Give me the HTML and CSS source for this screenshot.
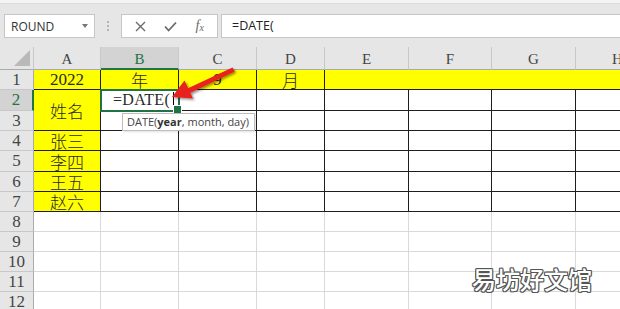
FILE: index.html
```html
<!DOCTYPE html>
<html lang="zh">
<head>
    <meta charset="UTF-8">
    <title>DATE 函数</title>
    <link rel="stylesheet" href="styles.css">
</head>
<body>
    <div class="ribbon-edge"></div>

    <div class="formula-bar">
        <div class="name-box"><span>ROUND</span><span class="drop"></span></div>
        <div class="grip"><i></i><i></i><i></i></div>
        <div class="fx-box">
            <svg width="11" height="11" viewBox="0 0 11 11"><path d="M1 1 L10 10 M10 1 L1 10" stroke="#6a6a6a" stroke-width="1.4" fill="none"/></svg>
            <svg width="13" height="11" viewBox="0 0 13 11"><path d="M1 5.5 L4.6 9.5 L12 1.5" stroke="#6a6a6a" stroke-width="1.8" fill="none"/></svg>
            <span class="fx"><i>f</i><sub>x</sub></span>
        </div>
        <div class="formula">=DATE(</div>
    </div>

    <div class="sheet">
        <!-- column headers -->
        <div class="corner"><span class="tri"></span></div>
        <div class="hd">A</div>
        <div class="hd on">B</div>
        <div class="hd">C</div>
        <div class="hd">D</div>
        <div class="hd">E</div>
        <div class="hd">F</div>
        <div class="hd">G</div>
        <div class="hd">H</div>

        <!-- row 1 -->
        <div class="rh">1</div>
        <div class="cell box fill">2022</div>
        <div class="cell box fill">年</div>
        <div class="cell box fill">9</div>
        <div class="cell box fill">月</div>
        <div class="cell box fill wide"></div>

        <!-- row 2 -->
        <div class="rh on">2</div>
        <div class="cell box fill tall">姓名</div>
        <div class="cell box editing">=DATE(<span class="cursor"></span></div>
        <div class="cell box"></div><div class="cell box"></div><div class="cell box"></div>
        <div class="cell box"></div><div class="cell box"></div><div class="cell box"></div>

        <!-- row 3 -->
        <div class="rh">3</div>
        <div class="cell box"></div><div class="cell box"></div><div class="cell box"></div>
        <div class="cell box"></div><div class="cell box"></div><div class="cell box"></div><div class="cell box"></div>

        <!-- rows 4-7 -->
        <div class="rh">4</div>
        <div class="cell box fill">张三</div>
        <div class="cell box"></div><div class="cell box"></div><div class="cell box"></div>
        <div class="cell box"></div><div class="cell box"></div><div class="cell box"></div><div class="cell box"></div>

        <div class="rh">5</div>
        <div class="cell box fill">李四</div>
        <div class="cell box"></div><div class="cell box"></div><div class="cell box"></div>
        <div class="cell box"></div><div class="cell box"></div><div class="cell box"></div><div class="cell box"></div>

        <div class="rh">6</div>
        <div class="cell box fill">王五</div>
        <div class="cell box"></div><div class="cell box"></div><div class="cell box"></div>
        <div class="cell box"></div><div class="cell box"></div><div class="cell box"></div><div class="cell box"></div>

        <div class="rh">7</div>
        <div class="cell box fill">赵六</div>
        <div class="cell box"></div><div class="cell box"></div><div class="cell box"></div>
        <div class="cell box"></div><div class="cell box"></div><div class="cell box"></div><div class="cell box"></div>

        <!-- empty rows -->
        <div class="rh">8</div>
        <div class="cell"></div><div class="cell"></div><div class="cell"></div><div class="cell"></div>
        <div class="cell"></div><div class="cell"></div><div class="cell"></div><div class="cell"></div>

        <div class="rh">9</div>
        <div class="cell"></div><div class="cell"></div><div class="cell"></div><div class="cell"></div>
        <div class="cell"></div><div class="cell"></div><div class="cell"></div><div class="cell"></div>

        <div class="rh">10</div>
        <div class="cell"></div><div class="cell"></div><div class="cell"></div><div class="cell"></div>
        <div class="cell"></div><div class="cell"></div><div class="cell"></div><div class="cell"></div>

        <div class="rh">11</div>
        <div class="cell"></div><div class="cell"></div><div class="cell"></div><div class="cell"></div>
        <div class="cell"></div><div class="cell"></div><div class="cell"></div><div class="cell"></div>

        <div class="rh">12</div>
        <div class="cell"></div><div class="cell"></div><div class="cell"></div><div class="cell"></div>
        <div class="cell"></div><div class="cell"></div><div class="cell"></div><div class="cell"></div>
    </div>

    <!-- overlays -->
    <div class="tip">DATE(<b>year</b>, month, day)</div>

    <svg class="arrow" width="90" height="50" viewBox="0 0 90 50">
        <defs>
            <filter id="sh" x="-20%" y="-40%" width="150%" height="180%">
                <feDropShadow dx="1.5" dy="1.5" stdDeviation="1" flood-color="#000" flood-opacity="0.45"/>
            </filter>
        </defs>
        <g filter="url(#sh)" fill="#e8211d" stroke="none">
            <path d="M72.5 7.5 L74.8 11.5 L30 33 L27.5 28.5 Z"/>
            <path d="M12 37 L24.5 20.5 L33 38.5 Z"/>
        </g>
    </svg>

    <div class="mark">易坊好文馆</div>
</body>
</html>
```

FILE: styles.css
```css
* { box-sizing: border-box; }

body {
    margin: 0;
    width: 620px;
    height: 309px;
    overflow: hidden;
    position: relative;
    background: #fff;
    font-family: "Open Sans", "Noto Sans", Arial, sans-serif;
}

/* top bar */
.ribbon-edge {
    height: 4px;
    background: #f4f4f4;
    border-bottom: 1px solid #dcdcdc;
}
.formula-bar {
    height: 43px;
    background: #e6e6e6;
    display: flex;
    align-items: flex-start;
    padding: 10px 0 0 4px;
}
.name-box {
    width: 91px;
    height: 24px;
    background: #fff;
    border: 1px solid #c6c6c6;
    display: flex;
    align-items: center;
    justify-content: space-between;
    padding: 0 6px 0 6px;
    font-size: 12px;
    color: #333;
}
.drop {
    width: 0;
    height: 0;
    border-left: 3.5px solid transparent;
    border-right: 3.5px solid transparent;
    border-top: 4px solid #777;
}
.grip {
    width: 26px;
    height: 24px;
    display: flex;
    flex-direction: column;
    align-items: center;
    justify-content: center;
    gap: 2px;
}
.grip i {
    width: 2px;
    height: 2px;
    background: #b4b4b4;
}
.fx-box {
    width: 97px;
    height: 24px;
    background: #fff;
    border: 1px solid #c6c6c6;
    display: flex;
    align-items: center;
    justify-content: space-around;
    padding: 0 4px;
}
.fx {
    font-family: "Liberation Serif", serif;
    color: #6a6a6a;
    font-size: 14px;
}
.fx sub { font-size: 10px; font-style: italic; vertical-align: -1px; }
.formula {
    flex: 1;
    height: 24px;
    margin-left: 3px;
    background: #fff;
    border: 1px solid #c6c6c6;
    border-right: none;
    padding-left: 10px;
    font-size: 12.5px;
    line-height: 22px;
    color: #222;
}

/* sheet grid */
.sheet {
    display: grid;
    grid-template-columns: 34px 67px 78px 78px 68px 84px 83px 84px 84px;
    grid-template-rows: 23px 20px 21px 20px 20px 21px 20px 20px 20px 20px 20px 20px 20px;
}
.corner {
    background: #e6e6e6;
    border-right: 1px solid #c8c8c8;
    border-bottom: 1px solid #ababab;
    display: flex;
    justify-content: flex-end;
    align-items: flex-end;
    padding: 0 3px 3px 0;
}
.tri {
    width: 0;
    height: 0;
    border-left: 16px solid transparent;
    border-bottom: 16px solid #b9b9b9;
}
.hd {
    background: #e6e6e6;
    border-right: 1px solid #c8c8c8;
    border-bottom: 1px solid #ababab;
    display: flex;
    align-items: center;
    justify-content: center;
    padding-top: 3px;
    font: 15px "Liberation Serif", serif;
    color: #444;
}
.hd.on {
    background: #d3d3d3;
    color: #217346;
    border-bottom: 2px solid #217346;
    padding-top: 4px;
}
.rh {
    background: #e6e6e6;
    border-right: 1px solid #ababab;
    border-bottom: 1px solid #c8c8c8;
    display: flex;
    align-items: center;
    justify-content: center;
    font: 17px "Liberation Serif", serif;
    color: #444;
}
.rh.on {
    background: #d3d3d3;
    color: #217346;
    border-right: 2px solid #217346;
}
.cell {
    border-right: 1px solid #d9d9d9;
    border-bottom: 1px solid #d9d9d9;
    display: flex;
    align-items: center;
    justify-content: center;
    font: 300 17px "Liberation Serif", "Noto Sans CJK SC", serif;
    color: #2a2a2a;
    background: #fff;
}
.cell.box { border-color: #1e1e1e; }
.cell.fill { background: #ffff00; }
.cell.tall { grid-row: span 2; }
.cell.wide { grid-column: span 4; }

.cell.editing {
    position: relative;
    z-index: 1;
    justify-content: flex-start;
    padding-left: 12px;
    outline: 2px solid #217346;
    outline-offset: -1px;
    font-size: 16px;
    letter-spacing: 0.3px;
}
.cell.editing::after {
    content: "";
    position: absolute;
    right: -4px;
    bottom: -4px;
    width: 7px;
    height: 7px;
    background: #217346;
    border: 1px solid #fff;
}
.cursor {
    width: 1px;
    height: 16px;
    background: #000;
    margin-left: 3px;
}

/* overlays */
.tip {
    position: absolute;
    left: 122px;
    top: 113px;
    width: 133px;
    height: 18px;
    padding: 0 4px;
    background: #fff;
    border: 1px solid #bdbdbd;
    box-shadow: 1px 1px 2px rgba(0,0,0,0.12);
    font-size: 11px;
    line-height: 16px;
    color: #444;
    white-space: nowrap;
    z-index: 2;
}
.tip b { color: #333; }
.arrow {
    position: absolute;
    left: 160px;
    top: 60px;
    z-index: 3;
}
.mark {
    position: absolute;
    left: 472px;
    top: 261px;
    font: 500 24px "Noto Sans CJK SC", sans-serif;
    color: #fff;
    text-shadow:
        1px 0 #555, -1px 0 #555, 0 1px #555, 0 -1px #555,
        1px 1px #555, -1px -1px #555, 1px -1px #555, -1px 1px #555,
        0 0 3px rgba(255,255,255,0.9);
}
```
